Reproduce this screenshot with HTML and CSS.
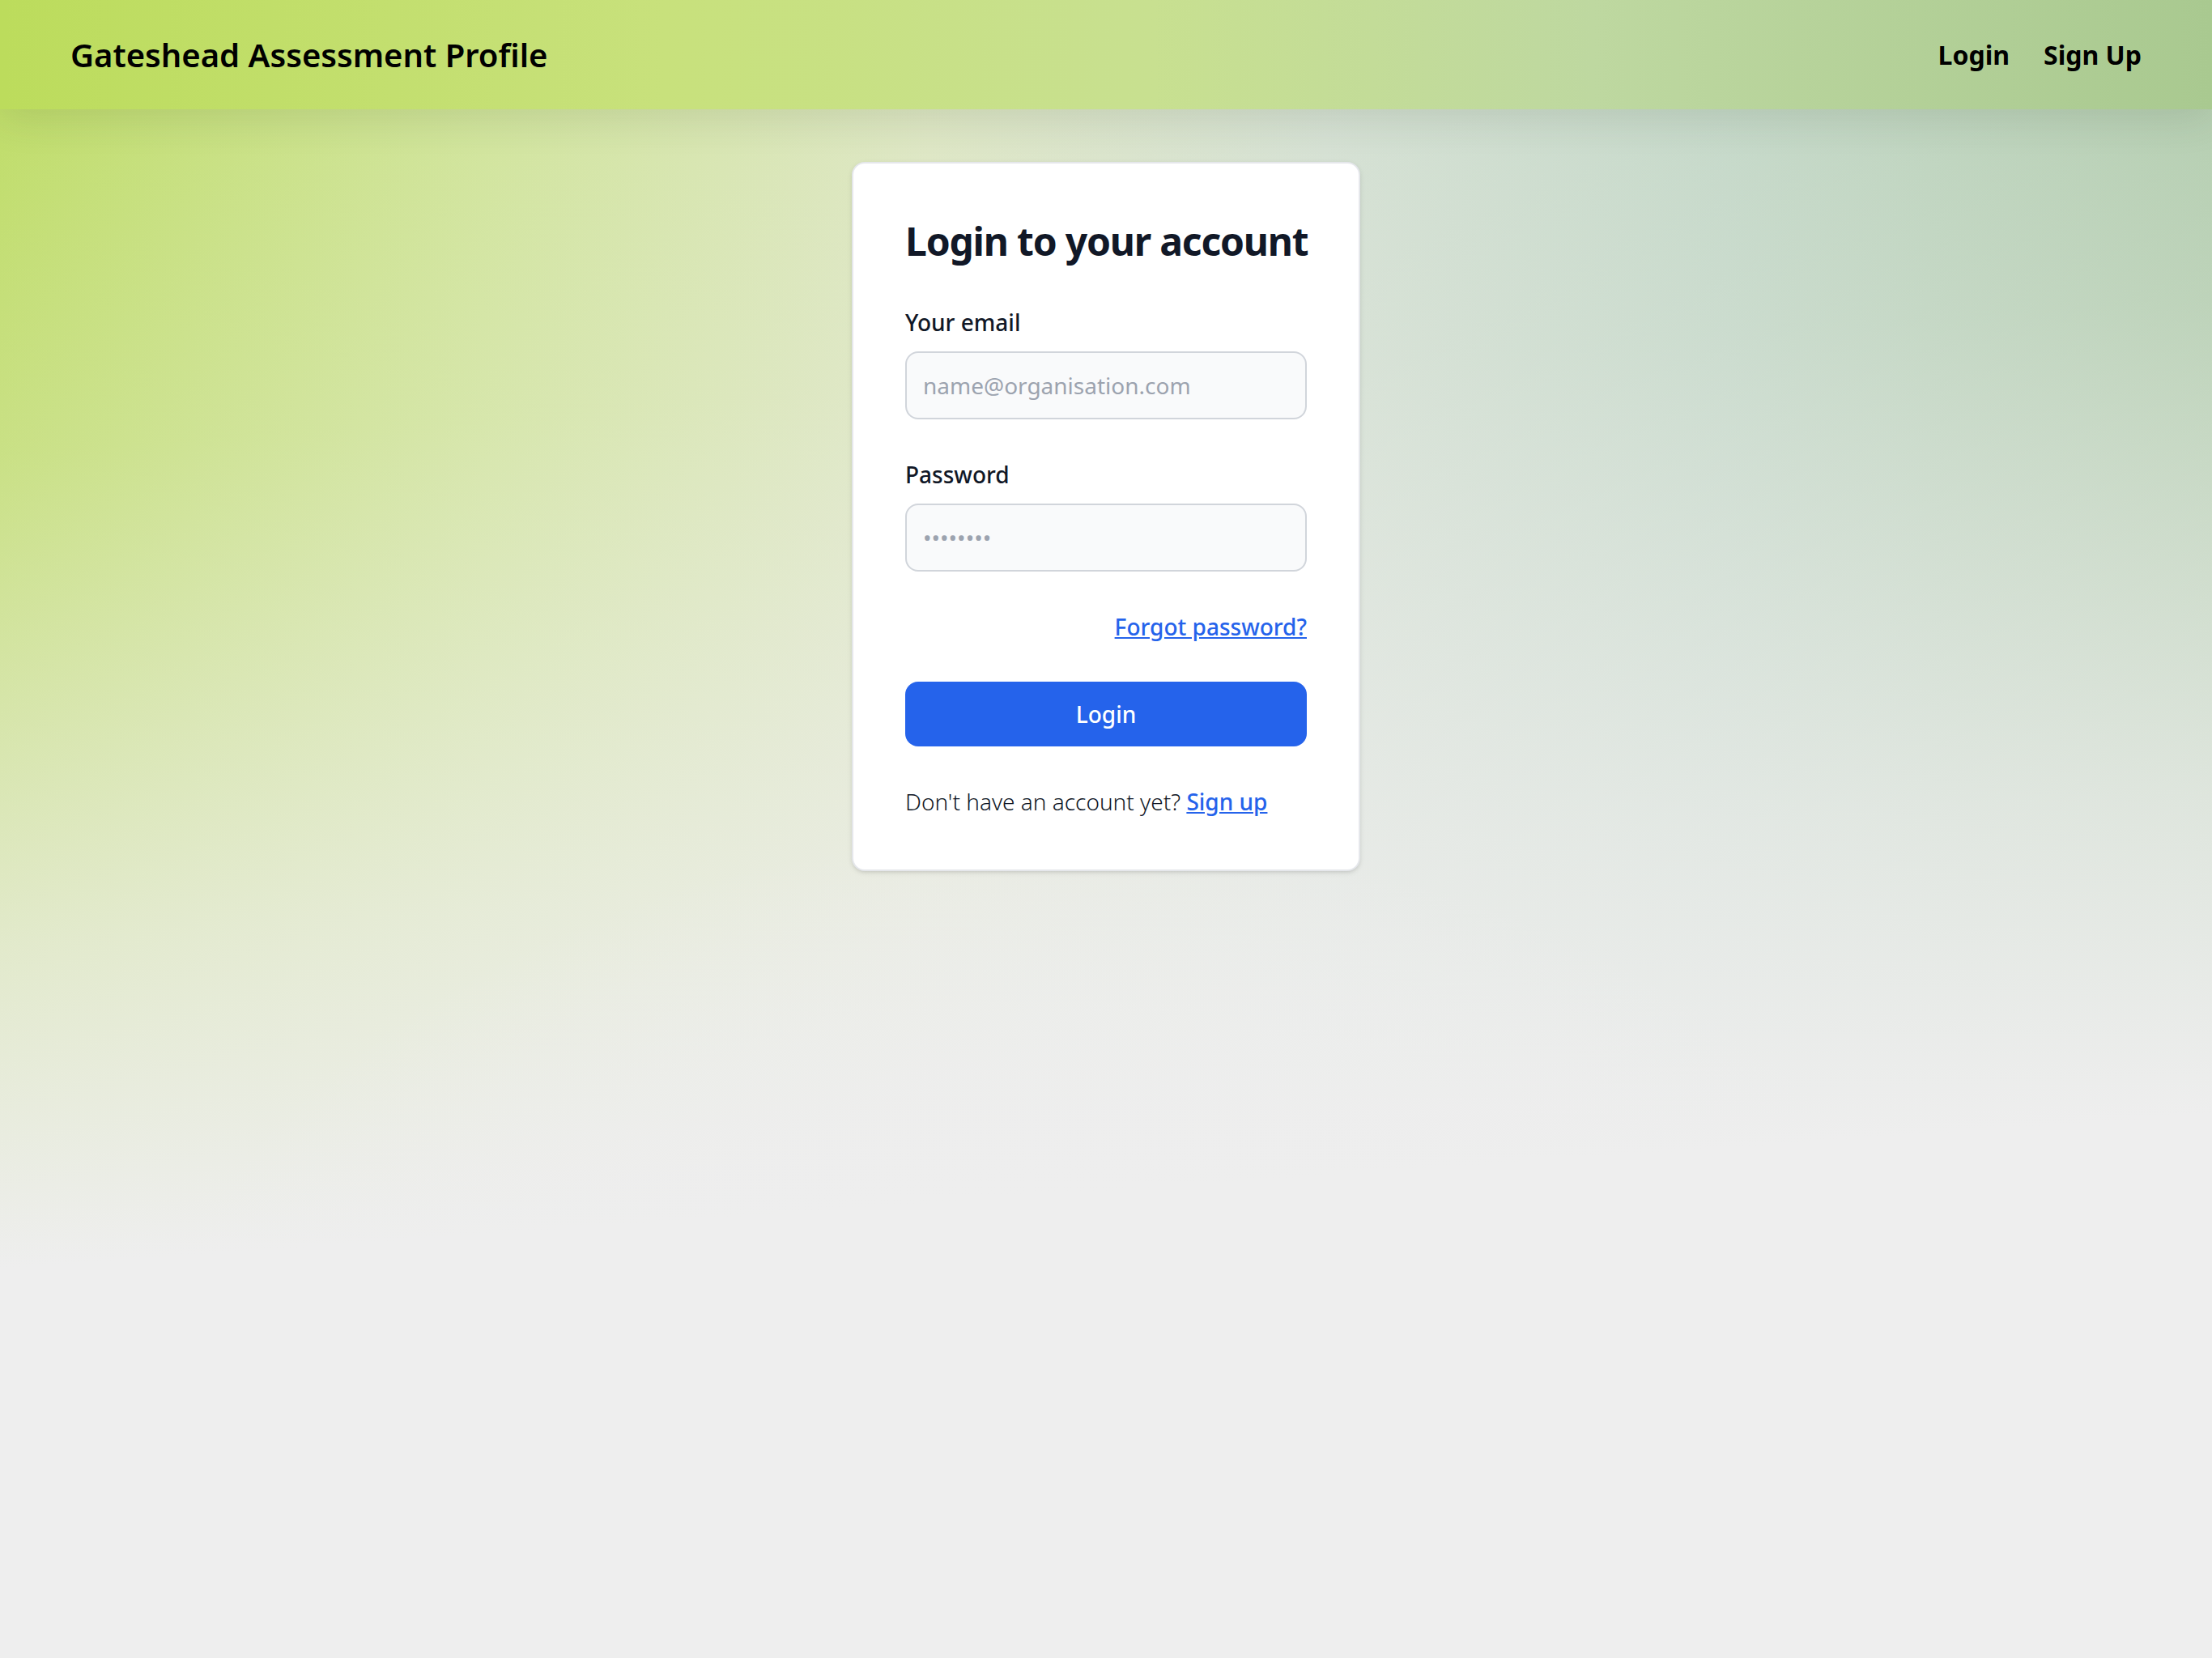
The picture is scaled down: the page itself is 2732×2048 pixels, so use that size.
FILE: index.html
```html
<!DOCTYPE html>
<html lang="en">
<head>
<meta charset="utf-8">
<title>Gateshead Assessment Profile</title>
<link rel="stylesheet" href="styles.css">
</head>
<body>
<header class="navbar">
  <a class="brand" href="#">Gateshead Assessment Profile</a>
  <nav class="nav-links">
    <a href="#">Login</a>
    <a href="#">Sign Up</a>
  </nav>
</header>
<main class="main">
  <section class="card">
    <h1 class="card-title">Login to your account</h1>
    <form class="form">
      <div class="field">
        <label class="label" for="email">Your email</label>
        <input class="input" type="email" id="email" placeholder="name@organisation.com">
      </div>
      <div class="field">
        <label class="label" for="password">Password</label>
        <input class="input" type="password" id="password" placeholder="••••••••">
      </div>
      <div class="forgot-row">
        <a class="link" href="#">Forgot password?</a>
      </div>
      <button class="btn" type="button">Login</button>
      <p class="signup-text">Don't have an account yet? <a class="link" href="#">Sign up</a></p>
    </form>
  </section>
</main>
</body>
</html>
```

FILE: styles.css
```css
html, body {
  margin: 0;
  padding: 0;
}
html {
  background: #eeeeee;
}
body {
  min-height: 2048px;
  font-family: "Noto Sans", "Open Sans", sans-serif;
  color: #111827;
  background:
    radial-gradient(ellipse 45% 45% at 48% 95%, #eeeeee 50%, rgba(238,238,238,0) 100%),
    linear-gradient(176deg, rgba(238,238,238,0) 0%, rgba(238,238,238,0.25) 25%, rgba(238,238,238,0.75) 52%, #eeeeee 70%),
    linear-gradient(90deg, #bddc62 0%, #cfe496 22%, #dce6c0 42%, #d2dfd0 60%, #c0d6c4 78%, #adcaa8 100%);
}
.navbar {
  height: 135px;
  box-sizing: border-box;
  display: flex;
  align-items: center;
  justify-content: space-between;
  padding: 0 87px;
  background: linear-gradient(90deg, #bcdc5c 0%, #c8e17c 30%, #c8e090 52%, #bed8a0 72%, #a9c990 100%);
  box-shadow: 0 10px 50px rgba(60, 70, 40, 0.14);
  position: relative;
}
.brand {
  font-size: 40px;
  font-weight: 600;
  color: #000;
  text-decoration: none;
  line-height: 56px;
}
.nav-links {
  display: flex;
  gap: 42px;
}
.nav-links a {
  font-size: 32px;
  font-weight: 700;
  color: #000;
  text-decoration: none;
  line-height: 48px;
}
.main {
  display: flex;
  justify-content: center;
  padding-top: 65px;
}
.card {
  width: 628px;
  box-sizing: border-box;
  background: #ffffff;
  border: 2px solid #e5e7eb;
  border-radius: 16px;
  box-shadow: 0 2px 6px rgba(0, 0, 0, 0.1), 0 2px 4px -2px rgba(0, 0, 0, 0.1);
  padding: 64px;
  display: flex;
  flex-direction: column;
  gap: 48px;
}
.card-title {
  margin: 0;
  font-size: 48px;
  line-height: 64px;
  font-weight: 700;
  letter-spacing: -1.2px;
  white-space: nowrap;
  color: #111827;
}
.form {
  display: flex;
  flex-direction: column;
  gap: 48px;
}
.field {
  display: flex;
  flex-direction: column;
}
.label {
  font-size: 28px;
  line-height: 40px;
  font-weight: 500;
  color: #111827;
  margin-bottom: 16px;
}
.input {
  width: 100%;
  box-sizing: border-box;
  padding: 20px;
  border: 2px solid #d1d5db;
  border-radius: 16px;
  background: #f9fafb;
  font-family: "Noto Sans", "Open Sans", sans-serif;
  font-size: 28px;
  line-height: 40px;
  color: #111827;
  outline: none;
}
.input::placeholder {
  color: #9ca3af;
}
.forgot-row {
  display: flex;
  justify-content: flex-end;
  line-height: 40px;
}
.link {
  font-size: 28px;
  font-weight: 500;
  color: #2563eb;
  text-decoration: underline;
}
.btn {
  width: 100%;
  height: 80px;
  border: none;
  border-radius: 16px;
  background: #2563eb;
  color: #ffffff;
  font-family: "Noto Sans", "Open Sans", sans-serif;
  font-size: 28px;
  line-height: 40px;
  font-weight: 500;
  padding: 20px 40px;
}
.signup-text {
  margin: 0;
  font-size: 28px;
  line-height: 40px;
  font-weight: 300;
  color: #111827;
}
```
